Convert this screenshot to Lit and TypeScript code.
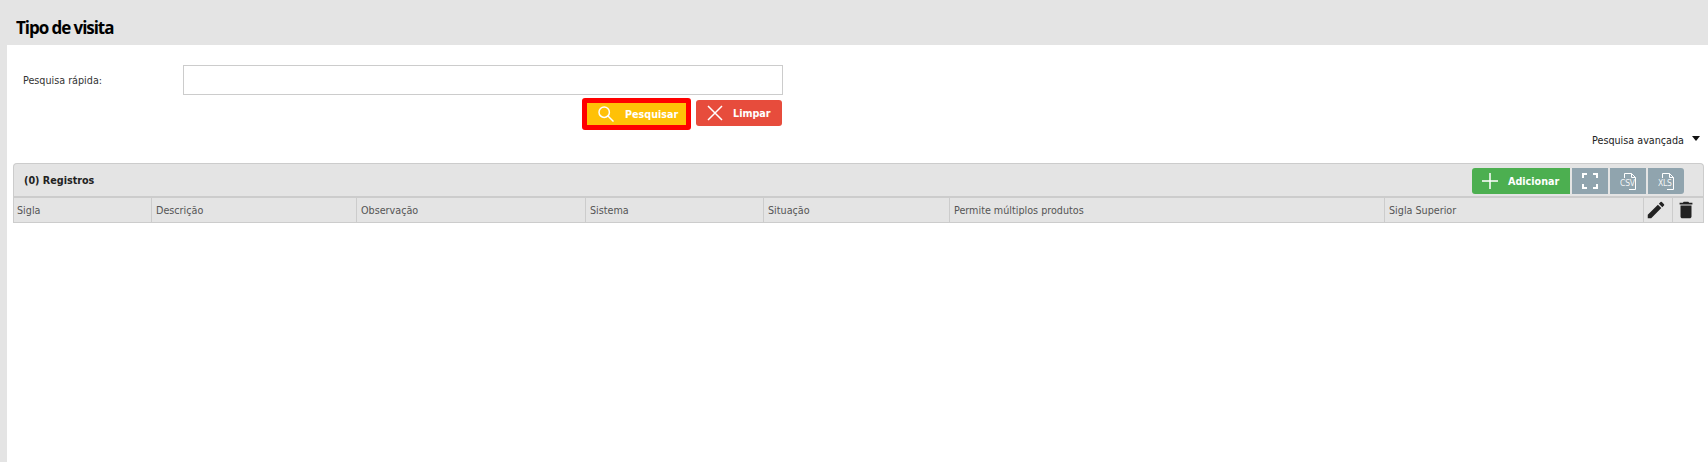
import { LitElement, html, css, svg } from "lit";
import { customElement } from "lit/decorators.js";

const columns = ["Sigla", "Descrição", "Observação", "Sistema", "Situação", "Permite múltiplos produtos", "Sigla Superior"];

const docIcon = (label: string) => html`<span class="doc"><svg width="26" height="26" viewBox="0 0 26 26" fill="none" stroke="#fff" stroke-width="1"><path d="M9.500 10V5.500H16.500L20.500 9.500V21.500H14"/><path d="M16.500 5.500V9.500H20.500"/></svg><span class="doc-label">${label}</span></span>`;

@customElement("app-root")
export class AppRoot extends LitElement {
  static styles = css`
    :host { display: block; height: 462px; background: #e4e4e4; font-family: "DejaVu Sans Condensed", "DejaVu Sans", sans-serif; overflow: hidden; }
    * { box-sizing: border-box; }
    .header { height: 45px; padding: 17px 0 0 16px; }
    h1 { margin: 0; font: bold 17px/22px "Open Sans", sans-serif; letter-spacing: -1.05px; color: #000; }
    .content { margin-left: 7px; height: 417px; background: #fff; padding: 0 6px 0 6px; }
    .search { display: grid; grid-template-columns: 160px 600px; padding: 20px 0 0 10px; align-items: center; }
    .search label { font-size: 10.7px; color: #333; }
    .search input { height: 30px; width: 600px; border: 1px solid #ccc; background: #fff; margin: 0; }
    .actions { display: flex; justify-content: flex-end; width: 769px; gap: 5px; margin-top: 3px; align-items: flex-start; }
    .btn { display: flex; align-items: center; border: 0; border-radius: 3px; color: #fff; font: bold 10.7px "DejaVu Sans Condensed", "DejaVu Sans", sans-serif; padding: 0; }
    .btn-search { width: 109px; height: 32px; border: 5px solid #f00; background: #ffc107; padding-left: 11px; gap: 11px; }
    .btn-clear { width: 86px; height: 26px; background: #e74c3c; margin-top: 2px; padding-left: 11px; gap: 10px; }
    .advanced { display: flex; justify-content: flex-end; align-items: center; height: 18px; margin-top: 1px; font-size: 10.7px; color: #222; gap: 8px; padding-right: 2px; }
    .caret { width: 0; height: 0; border: 4px solid transparent; border-top: 5px solid #111; border-bottom: 0; margin-top: -4px; }
    .panel { margin-top: 14px; width: 1691px; background: #e4e4e4; border: 1px solid #ccc; border-width: 1px 1px 0; border-radius: 4px 4px 0 0; }
    .panel-head { display: flex; justify-content: space-between; align-items: center; height: 34px; padding: 0 19px 0 10px; border-bottom: 2px solid #ccc; }
    .panel-head b { font-size: 10.7px; color: #222; }
    .tools { display: flex; gap: 2px; margin-top: 2px; }
    .tool { display: flex; align-items: center; justify-content: center; height: 26px; width: 36px; background: #90a4ae; border: 0; padding: 0; color: #fff; }
    .tool.add { width: 98px; background: #4caf50; border-radius: 3px 0 0 3px; font: bold 10.7px "DejaVu Sans Condensed", "DejaVu Sans", sans-serif; gap: 10px; justify-content: flex-start; padding-left: 10px; }
    .tool.last { border-radius: 0 3px 3px 0; }
    .doc { position: relative; display: block; width: 26px; height: 26px; }
    .doc-label { position: absolute; left: 5px; top: 10px; font: 8.5px "DejaVu Sans Condensed", "DejaVu Sans", sans-serif; letter-spacing: -0.2px; line-height: 10px; opacity: 0.9; }
    .thead { display: grid; grid-template-columns: 138px 205px 229px 178px 186px 435px 259px 29px 30px; height: 25px; border-bottom: 1px solid #ccc; }
    .th { display: flex; align-items: center; padding-left: 4px; font-size: 10.7px; color: #555; border-right: 1px solid #ccc; min-width: 0; white-space: nowrap; }
    .th:first-child { padding-left: 3px; }
    .th.icon { justify-content: center; padding: 0 5px 0 0; }
    .th.end { border-right: 0; }
  `;

  render() {
    return html`
      <div class="header"><h1>Tipo de visita</h1></div>
      <div class="content">
        <div class="search">
          <label>Pesquisa rápida:</label>
          <input type="text" />
        </div>
        <div class="actions">
          <button class="btn btn-search">
            <svg width="16" height="16" viewBox="0 0 16 16" fill="none" stroke="#fff" stroke-width="1.5"><circle cx="6.200" cy="6.200" r="5.200"/><path d="M10 10l5.500 5.500"/></svg>
            <span>Pesquisar</span>
          </button>
          <button class="btn btn-clear">
            <svg width="16" height="16" viewBox="0 0 16 16" fill="none" stroke="#fff" stroke-width="1.500"><path d="M1 1l14 14M15 1L1 15"/></svg>
            <span>Limpar</span>
          </button>
        </div>
        <div class="advanced"><span>Pesquisa avançada</span><span class="caret"></span></div>
        <div class="panel">
          <div class="panel-head">
            <b>(0) Registros</b>
            <div class="tools">
              <button class="tool add">
                <svg width="16" height="16" viewBox="0 0 16 16" fill="none" stroke="#fff" stroke-width="1.500"><path d="M8 0v16M0 8h16"/></svg>
                <span>Adicionar</span>
              </button>
              <button class="tool">
                <svg width="16" height="16" viewBox="0 0 16 16" fill="none" stroke="#fff" stroke-width="2"><path d="M1 5V1h4M11 1h4v4M15 11v4h-4M5 15H1v-4"/></svg>
              </button>
              <button class="tool">${docIcon("CSV")}</button>
              <button class="tool last">${docIcon("XLS")}</button>
            </div>
          </div>
          <div class="thead">
            ${columns.map((c) => html`<div class="th">${c}</div>`)}
            <div class="th icon">
              <svg width="22" height="22" viewBox="0 0 24 24" fill="#222">${svg`<path d="M3 17.25V21h3.75L17.81 9.94l-3.75-3.75L3 17.25zM20.71 7.04a1 1 0 0 0 0-1.41l-2.34-2.34a1 1 0 0 0-1.41 0l-1.83 1.83 3.75 3.75 1.83-1.83z"/>`}</svg>
            </div>
            <div class="th icon end">
              <svg width="22" height="22" viewBox="0 0 24 24" fill="#222">${svg`<path d="M6 19c0 1.1.9 2 2 2h8c1.100 0 2-.9 2-2V7H6v12zM19 4h-3.500l-1-1h-5l-1 1H5v2h14V4z"/>`}</svg>
            </div>
          </div>
        </div>
      </div>
    `;
  }
}
